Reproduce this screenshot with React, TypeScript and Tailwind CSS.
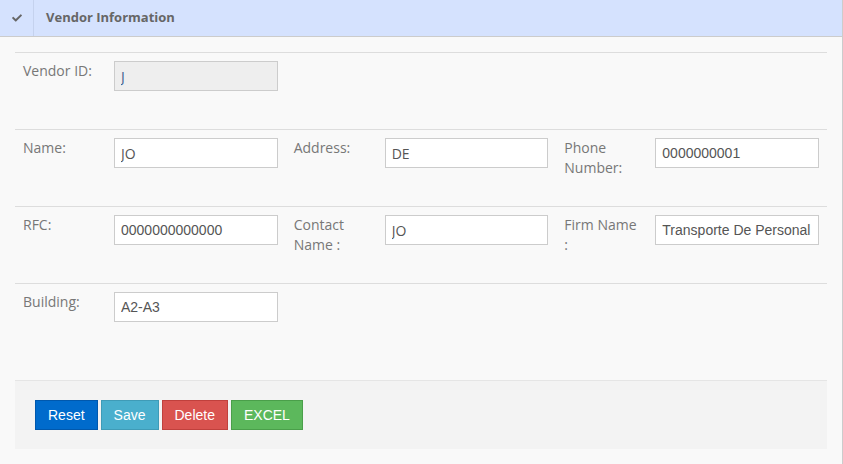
import { FaCheck } from 'react-icons/fa';

const labelCls = "w-[91px] shrink-0 pr-[15px] text-[14px] leading-[20px] text-[#777] font-['Open_Sans',sans-serif]";
const inputCls = "h-[30px] w-full min-w-0 border border-[#ccc] px-[6px] text-[14px] outline-none";

function Field({ label, value, sans, readOnly }: { label: string; value: string; sans?: boolean; readOnly?: boolean }) {
  return (
    <div className="flex items-start px-2">
      <div className={labelCls}>{label}</div>
      <input
        readOnly
        value={value}
        className={`${inputCls} ${sans ? "font-['Open_Sans',sans-serif]" : "font-['Liberation_Sans',Arial,sans-serif]"} ${readOnly ? 'bg-[#eeeeee] text-[#40608f]' : 'bg-white text-[#555]'}`}
      />
    </div>
  );
}

const rowCls = "grid h-[77px] grid-cols-3 border-t border-[#ddd] pt-2";

export default function App() {
  return (
    <div className="min-h-[464px] w-[843px] border-r border-[#ccc] bg-[#f9f9f9]">
      <div className="flex h-[37px] items-stretch border-b border-[#ccc] bg-[#d5e2fe]">
        <div className="flex w-[34px] items-center justify-center border-r border-[#c5d2ee] text-[#666]">
          <FaCheck size={10} />
        </div>
        <div className="flex items-center pl-[12px] text-[13px] font-bold text-[#666] font-['Open_Sans',sans-serif]">
          Vendor Information
        </div>
      </div>

      <div className="px-[15px] pt-[15px]">
        <div className={rowCls}>
          <Field label="Vendor ID:" value="J" sans readOnly />
        </div>
        <div className={rowCls}>
          <Field label="Name:" value="JO" sans />
          <Field label="Address:" value="DE" sans />
          <Field label="Phone Number:" value="0000000001" />
        </div>
        <div className={rowCls}>
          <Field label="RFC:" value="0000000000000" />
          <Field label="Contact Name :" value="JO" sans />
          <Field label="Firm Name :" value="Transporte De Personal" />
        </div>
        <div className={rowCls}>
          <Field label="Building:" value="A2-A3" />
        </div>

        <div className="mt-5 flex gap-[3px] border-t border-[#e5e5e5] bg-[#f3f3f3] px-5 pt-[19px] pb-[19px] font-['Liberation_Sans',Arial,sans-serif] text-[14px] text-white">
          <button className="border border-[#0058ad] bg-[#006bcc] px-3 py-[6px] leading-[16px]">Reset</button>
          <button className="border border-[#3f9bb7] bg-[#4aafcd] px-3 py-[6px] leading-[16px]">Save</button>
          <button className="border border-[#c0403c] bg-[#d9534f] px-3 py-[6px] leading-[16px]">Delete</button>
          <button className="border border-[#4a9f4a] bg-[#5cb85c] px-3 py-[6px] leading-[16px]">EXCEL</button>
        </div>
      </div>
    </div>
  );
}
